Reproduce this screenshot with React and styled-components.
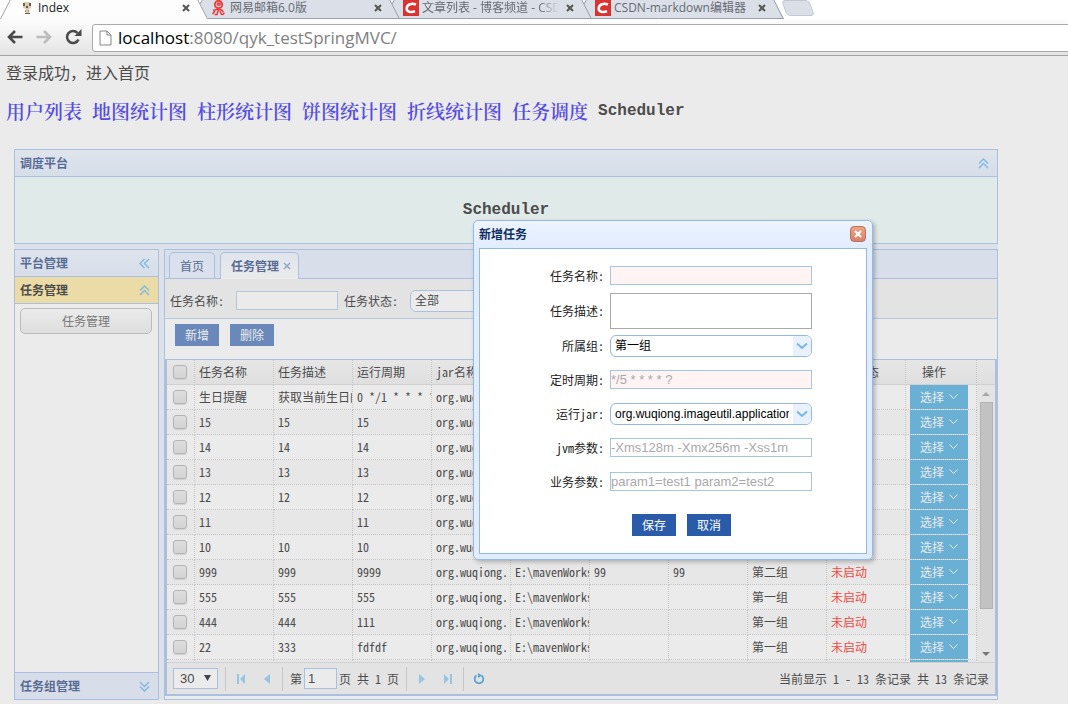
import React from 'react';
import styled, { createGlobalStyle, css } from 'styled-components';

const ui = '"Noto Sans Mono CJK SC", "Noto Sans CJK SC", sans-serif';
const arial = '"Liberation Sans", "Noto Sans CJK SC", sans-serif';
const chromeFont = '"Open Sans", "Noto Sans CJK SC", sans-serif';
const line = '#abc0e1';

const Global = createGlobalStyle`
  *, *::before, *::after { box-sizing: border-box; }
  body { margin: 0; background: #ebebeb; color: #4c4c4c; font: 12px/16px ${ui}; overflow: hidden; }
  button, input, select, textarea { font: inherit; color: inherit; margin: 0; padding: 0; border-radius: 0; outline: 0; }
  h1, h2, h3, p { margin: 0; font-size: inherit; }
`;

/* browser window */
const TabStrip = styled.div`
  display: flex;
  height: 19px;
  background: #fff;
  overflow: hidden;
  font-family: ${chromeFont};
`;
const BrowserTab = styled.div`
  position: relative;
  display: flex;
  align-items: flex-start;
  gap: 3px;
  flex: 0 0 208px;
  min-width: 0;
  height: 19px;
  padding: 0 14px 0 19px;
  margin-left: ${(p) => (p.$active ? '0' : '-16px')};
  z-index: ${(p) => p.$z};
  color: ${(p) => (p.$active ? '#222' : '#666b73')};
  > svg { flex: none; }
  &::before, &::after {
    content: '';
    position: absolute;
    z-index: -1;
    top: -4px;
    bottom: 0;
    background: ${(p) => (p.$active ? '#fdfdfd' : '#dbe0e8')};
    border: 0 solid #9aa0aa;
    border-bottom-width: ${(p) => (p.$active ? '0' : '1px')};
  }
  &::before { left: 0; right: 50%; border-left-width: 1px; transform: skewX(-27deg); transform-origin: bottom left; }
  &::after { right: 0; left: 40%; border-right-width: 1px; transform: skewX(27deg); transform-origin: bottom right; }
`;
const TabTitle = styled.span`
  flex: 1;
  min-width: 0;
  overflow: hidden;
  white-space: nowrap;
  line-height: 16px;
  ${(p) => p.$fade && css`mask-image: linear-gradient(90deg, #000 85%, transparent);`}
`;
const PlainButton = styled.button`
  display: flex;
  align-items: center;
  justify-content: center;
  border: 0;
  background: none;
  flex: none;
`;
const TabClose = styled(PlainButton)`
  width: 16px;
  height: 16px;
`;
const NewTab = styled(PlainButton)`
  width: 28px;
  height: 16px;
  background: #dbe0e8;
  border: 1px solid #c3c8d0;
  border-radius: 4px;
  transform: skewX(20deg);
`;
const AddressRow = styled.div`
  display: flex;
  align-items: center;
  height: 37px;
  padding-left: 7px;
  background: linear-gradient(#fdfdfd, #e4e4e4);
  border-bottom: 1px solid #a3a3a3;
  overflow: hidden;
`;
const NavButton = styled(PlainButton)`
  width: 29px;
  height: 28px;
  justify-content: flex-start;
`;
const Address = styled.div`
  flex: 1;
  display: flex;
  align-items: center;
  gap: 6px;
  height: 28px;
  margin: 1px -4px 0 -2px;
  padding-left: 6px;
  background: #fff;
  border: 1px solid #a9a9a9;
  border-radius: 3px;
  font: 17px/24px ${chromeFont};
  color: #808080;
  b { font-weight: 400; color: #000; }
`;

/* page */
const Page = styled.main`
  padding: 4px 70px 5px 14px;
`;
const Greeting = styled.p`
  margin-left: -8px;
  font-size: 16px;
  line-height: 24px;
`;
const Links = styled.nav`
  display: flex;
  align-items: center;
  gap: 10px;
  margin: 13px 0 24px -8px;
  font: 600 19px/28px "Noto Serif CJK SC", "Noto Sans CJK SC", serif;
  white-space: nowrap;
  a { color: #554de6; text-decoration: none; }
`;
const Mono = styled.span`
  font: 700 16px/24px "Liberation Mono", monospace;
`;
const Workspace = styled.div`
  display: flex;
  flex-direction: column;
  gap: 5px;
  background: #dce1ea;
`;
const Panel = styled.section`
  border: 1px solid ${line};
  background: #ebebeb;
`;
const PanelHeader = styled.header`
  display: flex;
  align-items: center;
  justify-content: space-between;
  height: 27px;
  padding: 0 8px 0 5px;
  font-weight: 700;
  color: ${(p) => (p.$selected ? '#4c4c4c' : '#586b94')};
  background: ${(p) => (p.$selected ? '#ebdba6' : p.$flat ? '#d8dee9' : 'linear-gradient(#dfe4ec, #d6deea)')};
  border: 0 solid ${line};
  border-bottom-width: ${(p) => (p.$flat ? '0' : '1px')};
  border-top-width: ${(p) => (p.$flat ? '1px' : '0')};
`;
const Banner = styled.div`
  display: flex;
  align-items: center;
  justify-content: center;
  height: 66px;
  background: #e0eae8;
`;
const Columns = styled.div`
  display: flex;
  gap: 5px;
`;
const Side = styled(Panel)`
  flex: 0 0 145px;
  display: flex;
  flex-direction: column;
`;
const SideBody = styled.div`
  flex: 1;
  padding: 4px 6px 4px 5px;
`;
const SideButton = styled.button`
  display: block;
  width: 100%;
  height: 26px;
  border: 1px solid #bbb;
  border-radius: 5px;
  background: linear-gradient(#ebebeb, #dedede);
  color: #777;
`;
const Center = styled(Panel)`
  flex: 1;
  min-width: 0;
  padding-bottom: 3px;
`;
const Tabs = styled.div`
  display: flex;
  align-items: flex-end;
  gap: 5px;
  height: 29px;
  padding-left: 4px;
  background: #d8dfeb;
  border-bottom: 1px solid ${line};
`;
const Tab = styled.button`
  display: flex;
  align-items: center;
  justify-content: center;
  gap: 4px;
  flex: none;
  height: ${(p) => (p.$active ? '27px' : '26px')};
  margin-bottom: ${(p) => (p.$active ? '-1px' : '0')};
  padding: 0 ${(p) => (p.$active ? '7px' : '10px')} 0 10px;
  border: 1px solid ${line};
  border-bottom: 0;
  border-radius: 5px 5px 0 0;
  background: ${(p) => (p.$active ? 'linear-gradient(#dfe4ec, #ebebeb)' : '#dbe1ec')};
  font-weight: ${(p) => (p.$active ? 700 : 400)};
  color: #586b94;
`;
const Search = styled.form`
  display: flex;
  align-items: center;
  height: 40px;
  padding: 4px 0 0 5px;
  background: #e3e3e3;
  border-bottom: 1px solid #b9c9dc;
  white-space: nowrap;
  overflow: hidden;
`;
const SearchInput = styled.input`
  width: 102px;
  height: 19px;
  margin: 0 6px 0 12px;
  border: 1px solid #b3c8da;
  background: #ebebeb;
`;
const Select = styled.span`
  display: flex;
  position: relative;
  width: ${(p) => p.$width || '202px'};
  height: 22px;
  border: 1px solid ${(p) => (p.$dim ? line : '#95b8e7')};
  border-radius: 6px;
  overflow: hidden;
  background: ${(p) => (p.$dim ? '#ebebeb' : '#fff')};
  select {
    appearance: none;
    flex: 1;
    min-width: 0;
    padding: 0 22px 0 4px;
    border: 0;
    background: none;
    font: 12px/20px ${arial};
    color: ${(p) => (p.$dim ? '#4c4c4c' : '#000')};
  }
`;
const SelectArrow = styled.span`
  position: absolute;
  right: 0;
  top: 0;
  width: 18px;
  height: 20px;
  display: flex;
  align-items: center;
  justify-content: center;
  background: #e9f1ff;
  pointer-events: none;
`;
const Actions = styled.div`
  display: flex;
  gap: 11px;
  padding: ${(p) => p.$pad};
`;
const Action = styled.button`
  width: 44px;
  height: 22px;
  border: 0;
  background: ${(p) => (p.$dim ? '#6a88b9' : '#295ba9')};
  color: ${(p) => (p.$dim ? '#ebebeb' : '#fff')};
`;
const GridBox = styled.div`
  border: 2px solid ${line};
  border-top-width: 1px;
`;
const GridView = styled.div`
  display: flex;
  height: 302px;
  overflow: hidden;
`;
const TableArea = styled.div`
  flex: 1;
  min-width: 0;
`;
const Table = styled.table`
  width: 100%;
  table-layout: fixed;
  border-collapse: separate;
  border-spacing: 0;
  th, td {
    height: 25px;
    padding: 0 0 0 4px;
    border: 0 dotted #c6c6c6;
    border-width: 0 1px 1px 0;
    text-align: left;
    font-weight: 400;
    line-height: 16px;
    white-space: nowrap;
    overflow: hidden;
  }
  th { background: linear-gradient(#e6e6e6, #dfdfdf); border-bottom: 1px solid #d0d0d0; }
  th:last-child { text-align: center; padding: 0 14px 0 0; }
  tbody tr:nth-child(even) { background: #e7e7e7; }
  td:first-child, th:first-child { padding-left: 6px; }
`;
const Check = styled.input`
  appearance: none;
  display: block;
  width: 14px;
  height: 14px;
  border: 1px solid #b4b4b4;
  border-radius: 3px;
  background: linear-gradient(#dedede, #d3d3d3);
  box-shadow: 0 1px 1px #d0d0d0;
`;
const Status = styled.span`
  color: #f04a44;
`;
const Pick = styled.button`
  display: flex;
  align-items: center;
  justify-content: center;
  gap: 5px;
  width: 58px;
  height: 24px;
  border: 0;
  background: #6aafd4;
  color: #ebebeb;
`;
const Scroll = styled.div`
  flex: 0 0 18px;
  display: flex;
  flex-direction: column;
  align-items: center;
  background: #e4e4e4;
`;
const ScrollHead = styled.div`
  align-self: stretch;
  height: 25px;
  background: linear-gradient(#e6e6e6, #dfdfdf);
  border-bottom: 1px solid #d0d0d0;
`;
const ScrollThumb = styled.div`
  width: 13px;
  height: 207px;
  margin-bottom: auto;
  background: #c2c2c2;
  border: 1px solid #b2b2b2;
`;
const ScrollButton = styled(PlainButton)`
  width: 18px;
  height: 17px;
`;
const Pager = styled.footer`
  display: flex;
  align-items: center;
  height: 32px;
  padding: 0 6px;
  background: #e3e3e3;
  border-top: 1px solid #d0d0d0;
  white-space: nowrap;
`;
const PageSize = styled.span`
  position: relative;
  display: flex;
  width: 45px;
  height: 21px;
  border: 1px solid ${line};
  background: #ebebeb;
  select { appearance: none; flex: 1; min-width: 0; padding-left: 6px; border: 0; background: none; font: 13px/19px ${arial}; }
  svg { position: absolute; right: 6px; top: 6px; pointer-events: none; }
`;
const Sep = styled.span`
  width: 1px;
  height: 24px;
  margin: 0 7px;
  background: #c6c6c6;
`;
const PagerButton = styled(PlainButton)`
  width: 16px;
  height: 24px;
  margin-right: ${(p) => p.$gap || '0'};
`;
const PageInput = styled.input`
  width: 33px;
  height: 21px;
  margin: 0 2px;
  padding-left: 3px;
  border: 1px solid ${line};
  background: #ebebeb;
  font: 13px/19px ${arial};
`;
const Info = styled.span`
  margin-left: auto;
`;

/* dialog */
const Dialog = styled.section`
  position: absolute;
  left: 473px;
  top: 220px;
  width: 400px;
  padding: 0 5px 5px;
  border: 1px solid #95b8e7;
  border-radius: 5px;
  background: linear-gradient(#edf3ff, #e0ecff 28px);
  box-shadow: 2px 2px 4px rgba(0, 0, 0, 0.25);
  color: #222;
`;
const DialogHeader = styled.header`
  display: flex;
  align-items: center;
  justify-content: space-between;
  height: 27px;
  padding: 0 1px 2px 0;
  font-weight: 700;
  color: #0e2d5f;
`;
const CloseButton = styled(PlainButton)`
  width: 16px;
  height: 16px;
  border: 1px solid #b9715f;
  border-radius: 4px;
  background: linear-gradient(#f0a37f, #d9806a);
`;
const DialogForm = styled.form`
  padding: 10px 0 17px;
  border: 1px solid #95b8e7;
  background: #fff;
`;
const Field = styled.div`
  display: flex;
  align-items: center;
  gap: 6px;
  height: ${(p) => (p.$tall ? '36px' : '34px')};
  padding-bottom: ${(p) => (p.$tall ? '0' : '1px')};
  label { width: 124px; text-align: right; }
`;
const TextInput = styled.input`
  width: 202px;
  height: 19px;
  border: 1px solid #a4c6e2;
  background: ${(p) => (p.$required ? '#fff3f3' : '#fff')};
  font: 13px/17px ${arial};
  &::placeholder { color: #a9a9a9; opacity: 1; }
`;
const TextArea = styled.textarea`
  width: 202px;
  height: 36px;
  border: 1px solid #a9a9a9;
  resize: none;
`;

const Cross = ({ size = 8, color = '#555', width = 2 }) => (
  <svg width={size} height={size} viewBox="0 0 8 8"><path d="M1 1l6 6M7 1L1 7" stroke={color} strokeWidth={width} /></svg>
);
const Chevrons = ({ dir = 'up' }) => (
  <svg width="11" height="11" viewBox="0 0 11 11" fill="none" stroke="#80b9dc" strokeWidth="1.4">
    <g transform={`rotate(${{ up: 0, left: -90, down: 180 }[dir]} 5.5 5.5)`}><path d="M1 5.5L5.5 1 10 5.5M1 10l4.5-4.5L10 10" /></g>
  </svg>
);
const Arrow = ({ right }) => (
  <svg width="16" height="14" viewBox="0 0 16 14" fill="none" stroke={right ? '#bcbcbc' : '#4a4a4a'} strokeWidth="2.6">
    <g transform={right ? 'rotate(180 8 7)' : undefined}><path d="M15.5 7H2.5M8 1L2 7l6 6" /></g>
  </svg>
);
const Tri = ({ down, color }) => (
  <svg width="8" height="4" viewBox="0 0 8 4"><path d={down ? 'M0 0h8L4 4z' : 'M0 4h8L4 0z'} fill={color} /></svg>
);
const Step = ({ bar, right }) => (
  <svg width="10" height="10" viewBox="0 0 10 10" fill="#96c5e1">
    <g transform={right ? 'rotate(180 5 5)' : undefined}>
      {bar ? <path d="M1 0h2v10H1zM9 0v10L4 5z" /> : <path d="M8 0v10L2 5z" />}
    </g>
  </svg>
);
const Csdn = () => (
  <svg width="16" height="16" viewBox="0 0 16 16"><path fill="#d8332f" d="M0 0h16v16H0z" /><path d="M13 4.500C9 3 4 4 3.700 8.300 3.500 12 8 12.700 12 11.300" fill="none" stroke="#fff" strokeWidth="2.600" /></svg>
);
const NetEase = () => (
  <svg width="16" height="16" viewBox="0 0 16 16" fill="none" stroke="#f0383a" strokeWidth="1.500"><circle cx="7.500" cy="4.500" r="3.700" strokeWidth="1.800" /><path d="M6 5h3.500M6 4.500C6.500 2.500 9.500 2.500 9.500 4.500M2 10.500l5-1.500 5 1.500M4 11L1.500 14M7.500 9.500L6 14.500H3.500M10 10l2.500 2M8.500 11.500c1.500 0 1 3 2.500 3s2-1 2-2" /></svg>
);
const Dog = () => (
  <svg width="16" height="16" viewBox="0 0 16 16"><path d="M4 3l2-1h4l2 1v5l-2 1 1 5H6l1-5-3-1z" fill="#d9cdb8" /><path d="M4 3h2v3H4zM10 3h2v3h-2zM7 6h2v2H7zM6 13h5v1H6z" fill="#6d5c4b" /><path d="M6 10h1v2H6zM9 10h1v2H9z" fill="#a3917a" /></svg>
);

const browserTabs = [
  { title: 'Index', icon: <Dog />, active: true },
  { title: '网易邮箱6.0版', icon: <NetEase /> },
  { title: '文章列表 - 博客频道 - CSDN', icon: <Csdn />, fade: true },
  { title: 'CSDN-markdown编辑器', icon: <Csdn /> },
];
const links = ['用户列表', '地图统计图', '柱形统计图', '饼图统计图', '折线统计图', '任务调度'];
const heads = ['任务名称', '任务描述', '运行周期', 'jar名称', 'jar路径', 'jvm参数', '业务参数', '所属组', '任务状态'];
const jar = 'org.wuqiong.imageutil';
const path = 'E:\\mavenWorkspace';
const off = '未启动';
const rows = [
  ['生日提醒', '获取当前生日的', '0 */1 * * * ?', jar, path, '', '', '第一组', off],
  ['15', '15', '15', jar, path, '', '', '第一组', off],
  ['14', '14', '14', jar, path, '', '', '第一组', off],
  ['13', '13', '13', jar, path, '', '', '第一组', off],
  ['12', '12', '12', jar, path, '', '', '第一组', off],
  ['11', '', '11', jar, path, '', '', '第一组', off],
  ['10', '10', '10', jar, path, '', '', '第一组', off],
  ['999', '999', '9999', jar, path, '99', '99', '第二组', off],
  ['555', '555', '555', jar, path, '', '', '第一组', off],
  ['444', '444', '111', jar, path, '', '', '第一组', off],
  ['22', '333', 'fdfdf', jar, path, '', '', '第一组', off],
  ['', '', '', '', '', '', '', '', ''],
];

const Combo = ({ id, value, ...rest }) => (
  <Select {...rest}>
    <select id={id} defaultValue={value}><option>{value}</option></select>
    <SelectArrow>
      <svg width="12" height="8" viewBox="0 0 12 8"><path d="M1 1.500l5 4.500 5-4.500" fill="none" stroke="#76b9e8" strokeWidth="2" /></svg>
    </SelectArrow>
  </Select>
);

export default function App() {
  return (
    <>
      <Global />
      <TabStrip>
        {browserTabs.map((t, i) => (
          <BrowserTab key={t.title} $active={t.active} $z={5 - i}>
            {t.icon}
            <TabTitle $fade={t.fade}>{t.title}</TabTitle>
            <TabClose aria-label="关闭标签页"><Cross /></TabClose>
          </BrowserTab>
        ))}
        <NewTab aria-label="新标签页" />
      </TabStrip>
      <AddressRow>
        <NavButton aria-label="后退"><Arrow /></NavButton>
        <NavButton aria-label="前进"><Arrow right /></NavButton>
        <NavButton aria-label="刷新">
          <svg width="17" height="16" viewBox="0 0 17 16"><path d="M13.500 10.500A6 6 0 1 1 12.500 4" fill="none" stroke="#4a4a4a" strokeWidth="2.600" /><path d="M16.500 0v7h-7z" fill="#4a4a4a" /></svg>
        </NavButton>
        <Address>
          <svg width="13" height="16" viewBox="0 0 13 16" fill="#fff" stroke="#868686"><path d="M1 1h7l4 4v10H1zM8 1v4h4" /></svg>
          <span><b>localhost</b>:8080/qyk_testSpringMVC/</span>
        </Address>
      </AddressRow>
      <Page>
        <Greeting>登录成功，进入首页</Greeting>
        <Links>
          {links.map((l) => <a key={l} href="#top">{l}</a>)}
          <Mono>Scheduler</Mono>
        </Links>
        <Workspace>
          <Panel>
            <PanelHeader><h2>调度平台</h2><PlainButton aria-label="收起"><Chevrons /></PlainButton></PanelHeader>
            <Banner><Mono>Scheduler</Mono></Banner>
          </Panel>
          <Columns>
            <Side>
              <PanelHeader><h2>平台管理</h2><PlainButton aria-label="折叠"><Chevrons dir="left" /></PlainButton></PanelHeader>
              <PanelHeader $selected><h3>任务管理</h3><PlainButton aria-label="收起"><Chevrons /></PlainButton></PanelHeader>
              <SideBody><SideButton>任务管理</SideButton></SideBody>
              <PanelHeader $flat><h3>任务组管理</h3><PlainButton aria-label="展开"><Chevrons dir="down" /></PlainButton></PanelHeader>
            </Side>
            <Center>
              <Tabs>
                <Tab>首页</Tab>
                <Tab $active>任务管理<Cross color="#92a5c4" width={1.5} /></Tab>
              </Tabs>
              <Search>
                <label htmlFor="q-name">任务名称:</label>
                <SearchInput id="q-name" />
                <label htmlFor="q-state">任务状态:</label>
                <Actions $pad="0 0 0 12px"><Combo id="q-state" value="全部" $dim $width="120px" /></Actions>
              </Search>
              <Actions $pad="5px 10px 13px">
                <Action $dim>新增</Action>
                <Action $dim>删除</Action>
              </Actions>
              <GridBox>
                <GridView>
                  <TableArea>
                    <Table>
                      <colgroup>
                        <col style={{ width: 28 }} />
                        {heads.map((h) => <col key={h} />)}
                        <col style={{ width: 71 }} />
                      </colgroup>
                      <thead>
                        <tr>
                          <th><Check type="checkbox" aria-label="全选" /></th>
                          {heads.map((h) => <th key={h}>{h}</th>)}
                          <th>操作</th>
                        </tr>
                      </thead>
                      <tbody>
                        {rows.map((cells, r) => (
                          <tr key={r}>
                            <td><Check type="checkbox" aria-label={cells[0] || '选择行'} /></td>
                            {cells.map((c, i) => <td key={heads[i]}>{i === 8 ? <Status>{c}</Status> : c}</td>)}
                            <td>
                              <Pick aria-label="选择">
                                {cells[0] && <>选择<svg width="9" height="6" viewBox="0 0 9 6"><path d="M0.500 0.500l4 4 4-4" fill="none" stroke="#ebebeb" /></svg></>}
                              </Pick>
                            </td>
                          </tr>
                        ))}
                      </tbody>
                    </Table>
                  </TableArea>
                  <Scroll>
                    <ScrollHead />
                    <ScrollButton aria-label="向上滚动"><Tri color="#a8a8a8" /></ScrollButton>
                    <ScrollThumb />
                    <ScrollButton aria-label="向下滚动"><Tri down color="#777" /></ScrollButton>
                  </Scroll>
                </GridView>
                <Pager>
                  <PageSize>
                    <select aria-label="每页条数" defaultValue="30"><option>30</option></select>
                    <svg width="7" height="6" viewBox="0 0 7 6"><path d="M0 0h7L3.500 6z" fill="#444" /></svg>
                  </PageSize>
                  <Sep />
                  <PagerButton aria-label="首页" $gap="10px"><Step bar /></PagerButton>
                  <PagerButton aria-label="上一页"><Step /></PagerButton>
                  <Sep />
                  <label htmlFor="page-no">第</label>
                  <PageInput id="page-no" defaultValue="1" />
                  <span>页 共 1 页</span>
                  <Sep />
                  <PagerButton aria-label="下一页" $gap="10px"><Step right /></PagerButton>
                  <PagerButton aria-label="末页"><Step bar right /></PagerButton>
                  <Sep />
                  <PagerButton aria-label="刷新">
                    <svg width="12" height="12" viewBox="0 0 12 12"><path d="M3.500 2.500a4.300 4.300 0 1 0 5 0" fill="none" stroke="#5aa5d3" strokeWidth="1.800" /><path d="M5 0l4 2.500L5 5z" fill="#5aa5d3" /></svg>
                  </PagerButton>
                  <Info>当前显示 1 - 13 条记录 共 13 条记录</Info>
                </Pager>
              </GridBox>
            </Center>
          </Columns>
        </Workspace>
      </Page>
      <Dialog role="dialog" aria-labelledby="dialog-title">
        <DialogHeader>
          <h2 id="dialog-title">新增任务</h2>
          <CloseButton aria-label="关闭"><Cross color="#fff" width={2.2} /></CloseButton>
        </DialogHeader>
        <DialogForm>
          <Field><label htmlFor="name">任务名称:</label><TextInput id="name" $required /></Field>
          <Field $tall><label htmlFor="desc">任务描述:</label><TextArea id="desc" /></Field>
          <Field><label htmlFor="group">所属组:</label><Combo id="group" value="第一组" /></Field>
          <Field><label htmlFor="cron">定时周期:</label><TextInput id="cron" $required placeholder="*/5 * * * * ?" /></Field>
          <Field><label htmlFor="jar">运行jar:</label><Combo id="jar" value="org.wuqiong.imageutil.application" /></Field>
          <Field><label htmlFor="jvm">jvm参数:</label><TextInput id="jvm" placeholder="-Xms128m -Xmx256m -Xss1m" /></Field>
          <Field><label htmlFor="args">业务参数:</label><TextInput id="args" placeholder="param1=test1 param2=test2" /></Field>
          <Actions $pad="15px 0 0 152px">
            <Action type="button">保存</Action>
            <Action type="button">取消</Action>
          </Actions>
        </DialogForm>
      </Dialog>
    </>
  );
}
